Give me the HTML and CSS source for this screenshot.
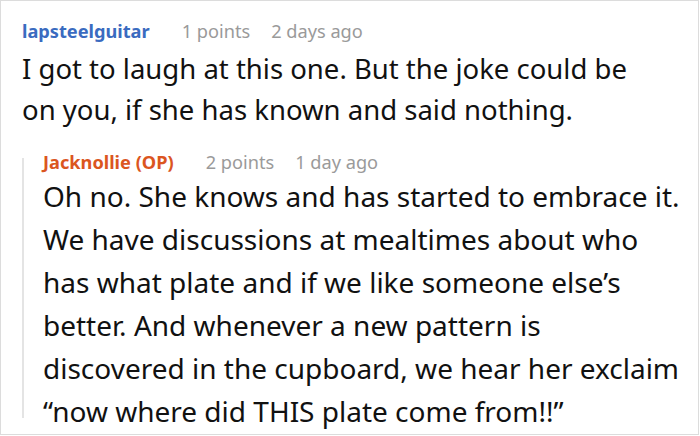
FILE: index.html
```html
<!DOCTYPE html>
<html>
<head>
<meta charset="utf-8">
<link rel="stylesheet" href="styles.css">
</head>
<body>
<div class="frame">
  <div class="comment">
    <div class="meta">
      <span class="user">lapsteelguitar</span>
      <span class="info">1 points</span>
      <span class="info">2 days ago</span>
    </div>
    <p class="text">I got to laugh at this one. But the joke could be on you, if she has known and said nothing.</p>
  </div>
  <div class="reply">
    <div class="rail"></div>
    <div class="reply-body">
      <div class="meta">
        <span class="user op">Jacknollie (OP)</span>
        <span class="info">2 points</span>
        <span class="info">1 day ago</span>
      </div>
      <p class="text big">Oh no. She knows and has started to embrace it. We have discussions at mealtimes about who has what plate and if we like someone else’s better. And whenever a new pattern is discovered in the cupboard, we hear her exclaim “now where did THIS plate come from!!”</p>
    </div>
  </div>
</div>
</body>
</html>
```
FILE: styles.css
```css
html, body {
  margin: 0;
  padding: 0;
  background: #fff;
}
.frame {
  width: 697px;
  height: 433px;
  border: 1px solid #dcdcdc;
  font-family: "Noto Sans", "Open Sans", sans-serif;
  color: #111;
  overflow: hidden;
}
.comment {
  padding: 18px 20px 0 21px;
}
.meta {
  display: flex;
  gap: 32px;
  font-size: 18.2px;
  line-height: 24px;
}
.user {
  font-weight: 700;
  color: #3a6bc0;
}
.user.op {
  color: #db561f;
}
.info {
  color: #9a9a9a;
}
.meta .info + .info {
  margin-left: -11px;
}
.text {
  margin: 5px 0 0;
  font-size: 27.5px;
  line-height: 41px;
  width: 625px;
}
.reply {
  display: flex;
  align-items: flex-start;
  margin: 20px 0 0 21px;
}
.rail {
  flex: none;
  width: 2px;
  height: 260px;
  margin-top: 8px;
  background: #e4e4e4;
}
.reply-body {
  padding-left: 19px;
}
.text.big {
  font-size: 28px;
  line-height: 43px;
  width: 645px;
  margin-top: 1px;
}
```
